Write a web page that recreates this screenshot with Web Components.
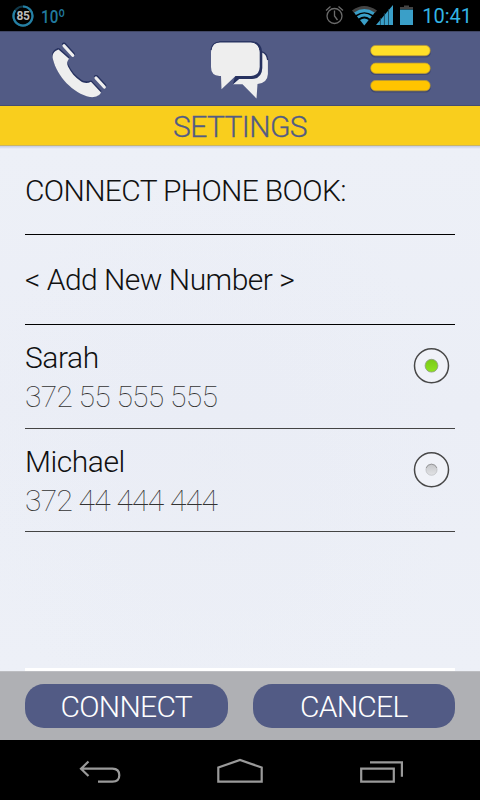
<!DOCTYPE html>
<html lang="en">
<head>
<meta charset="utf-8">
<title>Settings</title>
<style>
    body{
        margin: 0;
        background: #000;
        font-family: Roboto, sans-serif;
    }
</style>
</head>
<body>
<phone-screen>
    <status-bar slot="status" battery="85" temp="10º" time="10:41"></status-bar>
    <app-header slot="header"></app-header>
    <title-bar slot="title">SETTINGS</title-bar>
    <list-row style="--row-height: 89px; --ls: -.65px">CONNECT PHONE BOOK:</list-row>
    <list-row style="--row-height: 90px; --ls: -.5px">&lt; Add New Number &gt;</list-row>
    <contact-row name="Sarah" number="372 55 555 555" checked></contact-row>
    <contact-row name="Michael" number="372 44 444 444"></contact-row>
    <app-button slot="actions">CONNECT</app-button>
    <app-button slot="actions">CANCEL</app-button>
    <nav-bar slot="nav"></nav-bar>
</phone-screen>

<script>
class PhoneScreen extends HTMLElement{
    constructor(){
        super();
        this.attachShadow({mode: 'open'});
        this.shadowRoot.innerHTML=`
            <style>
                :host{
                    display: flex;
                    flex-direction: column;
                    width: 480px;
                    height: 800px;
                    overflow: hidden;
                }
                main{
                    box-sizing: border-box;
                    flex: 1;
                    display: flex;
                    flex-direction: column;
                    padding: 0 25px;
                    background:
                        linear-gradient(#fff,#fff) 25px 100% / 430px 3px no-repeat,
                        linear-gradient(#c5cbe4, rgba(197,203,228,0)) 0 0 / 100% 3px no-repeat,
                        radial-gradient(ellipse at 45% 60%, rgba(232,235,244,.4), rgba(232,235,244,0) 65%),
                        linear-gradient(#edf0f7, #ebeef6 50%, #edf0f7);
                }
                footer{
                    box-sizing: border-box;
                    height: 69px;
                    display: flex;
                    gap: 25px;
                    padding: 12px 25px;
                    background: #afb0b4;
                    border-top: 1px solid #bcbdc1;
                }
            </style>
            <slot name="status"></slot>
            <slot name="header"></slot>
            <slot name="title"></slot>
            <main><slot></slot></main>
            <footer><slot name="actions"></slot></footer>
            <slot name="nav"></slot>
        `;
    }
}

class StatusBar extends HTMLElement{
    constructor(){
        super();
        this.attachShadow({mode: 'open'});
    }

    connectedCallback(){
        this.shadowRoot.innerHTML=`
            <style>
                :host{
                    box-sizing: border-box;
                    display: flex;
                    align-items: center;
                    height: 31px;
                    padding: 0 8px 0 12px;
                    background: #000;
                    color: #33b5e5;
                }
                svg{ display: block; }
                .battery{
                    display: grid;
                    place-items: center;
                    width: 22px;
                    height: 22px;
                }
                .battery > *{ grid-area: 1 / 1; }
                .battery span{
                    font-size: 12px;
                    font-weight: 700;
                    line-height: 22px;
                    color: #bbb;
                    letter-spacing: -.3px;
                }
                .temp{
                    margin-left: 7px;
                    font-size: 19px;
                    font-weight: 500;
                    line-height: 31px;
                    color: #217a9f;
                    transform: scaleX(.8);
                    transform-origin: 0 50%;
                    padding-top: 2px;
                }
                .right{
                    margin-left: auto;
                    display: flex;
                    align-items: center;
                }
                .time{
                    margin-left: 8px;
                    width: 50px;
                    text-align: right;
                    font-size: 20px;
                    line-height: 31px;
                    padding-top: 2px;
                    white-space: nowrap;
                }
            </style>
            <div class="battery">
                <svg width="22" height="22" fill="none" stroke-width="2.2">
                    <circle cx="11" cy="11" r="9.5" stroke="#10394a"/>
                    <path d="M11 1.5A9.5 9.5 0 1 1 3.3 5.4" stroke="#2580a5"/>
                </svg>
                <span>${this.getAttribute('battery')}</span>
            </div>
            <span class="temp">${this.getAttribute('temp')}</span>
            <div class="right">
                <svg width="90" height="31" viewBox="325 0 90 31">
                    <g fill="none" stroke="#6b6b6b" stroke-width="1.3">
                        <circle cx="335.5" cy="16" r="7.5"/>
                        <path d="M335.5 10.5V16l3 4M327 10.5l4.5-4M344 10.5l-4.5-4"/>
                    </g>
                    <path d="M353 10.5Q365 1.5 378 10.5L375.7 13.3Q365 6 355.3 13.3Z" fill="#444"/>
                    <g fill="none" stroke="#3a9fc8" stroke-width="3">
                        <path d="M356 13.8Q365.3 7.5 374.8 13.8"/>
                        <path d="M358.8 17.4Q365.3 12.7 372 17.4"/>
                    </g>
                    <path d="M361 20Q365.3 16.8 369.7 20L365.3 25.5Z" fill="#3a9fc8"/>
                    <path d="M377 25L394 5V25Z" fill="#3a9fc8"/>
                    <path d="M381.4 18v7M385.4 13v12M389.5 9v16" stroke="#163f50" stroke-width=".8"/>
                    <path d="M401 9V7h4V5.5h5V7h4V9Z" fill="#444"/>
                    <path d="M401 9.5h13V25h-13z" fill="#3a9fc8"/>
                </svg>
                <span class="time">${this.getAttribute('time')}</span>
            </div>
        `;
    }
}

class AppHeader extends HTMLElement{
    constructor(){
        super();
        this.attachShadow({mode: 'open'});
        this.shadowRoot.innerHTML=`
            <style>
                :host{
                    box-sizing: border-box;
                    display: grid;
                    grid-template-columns: repeat(3, 160px);
                    height: 75px;
                    background: #525b85;
                    border-top: 1px solid #414765;
                    border-bottom: 1px solid #464d70;
                }
                svg{ display: block; }
            </style>
            <svg width="160" height="73" viewBox="0 32 160 73">
                <defs>
                    <g id="phone">
                        <path d="M58.5 49.5C54 51 51.5 54.5 53 59.5C57 76 73 93.5 90 97C95 97.7 99.5 95.7 101 92.5L91 81.8C87.5 83.5 84 83.5 80.5 81C75 77.5 71 72.5 68 66.5C66.5 63 67.3 61 69 58.7Z" stroke="none"/>
                        <path d="M64 45.7L72.7 55.3M96 78L104.3 87" stroke-width="3.2" stroke-linecap="round"/>
                    </g>
                </defs>
                <use href="#phone" x="-.5" y="-1.4" fill="#273260" stroke="#273260"/>
                <use href="#phone" x=".5" y="-1.4" fill="#273260" stroke="#273260"/>
                <use href="#phone" fill="#eee" stroke="#eee"/>
            </svg>
            <svg width="160" height="73" viewBox="160 32 160 73">
                <path d="M260 51.2Q267.7 52.5 267.9 61V74Q267.5 83 257.5 84L256.5 98.5L242.5 84.3H233L240 78H256Z" fill="#eee"/>
                <path d="M262 51.8Q267.2 53.5 267.7 60" fill="none" stroke="#273260" stroke-width="1.3"/>
                <path d="M219 41.3H251Q261.5 41.5 262.3 52.5V68Q262 78.500 252 79H239L233 84.3L235 76Z" fill="#273260"/>
                <path d="M211 52Q211.5 42.3 220 42H251Q259.3 42.5 259.7 52V67Q259.3 75.5 251 76H235.5L221.5 89.3L221 76H219.5Q211 75.5 211 67Z" fill="#eee"/>
                <path d="M211 50Q212 42 220 42H251Q259 42.5 260 50" fill="none" stroke="#273260" stroke-width="1.2"/>
            </svg>
            <svg width="160" height="73" viewBox="320 32 160 73">
                <g fill="#343d66" opacity=".6">
                    <rect x="370" y="46.5" width="61" height="11" rx="5.5"/>
                    <rect x="370" y="64" width="61" height="11" rx="5.5"/>
                    <rect x="370" y="81.5" width="61" height="11" rx="5.5"/>
                </g>
                <g stroke="#bb9a35" stroke-width=".8">
                    <rect x="370.7" y="45.4" width="59.5" height="10.3" rx="5" fill="#ffdf29"/>
                    <rect x="370.7" y="63.1" width="59.5" height="10.3" rx="5" fill="#ffd209"/>
                    <rect x="370.7" y="80.5" width="59.5" height="10.3" rx="5" fill="#ffc400"/>
                </g>
            </svg>
        `;
    }
}

class TitleBar extends HTMLElement{
    constructor(){
        super();
        this.attachShadow({mode: 'open'});
        this.shadowRoot.innerHTML=`
            <style>
                :host{
                    box-sizing: border-box;
                    display: block;
                    height: 40px;
                    padding-top: 1px;
                    text-align: center;
                    font-size: 30px;
                    font-weight: 300;
                    line-height: 40px;
                    letter-spacing: -.6px;
                    -webkit-text-stroke: .3px #525b85;
                    color: #525b85;
                    background: #f9ce1d;
                    border-bottom: 1px solid #c9b566;
                }
            </style>
            <slot></slot>
        `;
    }
}

class ListRow extends HTMLElement{
    constructor(){
        super();
        this.attachShadow({mode: 'open'});
        this.shadowRoot.innerHTML=`
            <style>
                :host{
                    box-sizing: border-box;
                    display: block;
                    height: var(--row-height);
                    padding-top: 27px;
                    border-bottom: 1px solid #000;
                    font-size: 30px;
                    font-weight: 300;
                    line-height: 36px;
                    letter-spacing: var(--ls, 0);
                    color: #111;
                }
            </style>
            <slot></slot>
        `;
    }
}

class ContactRow extends HTMLElement{
    constructor(){
        super();
        this.attachShadow({mode: 'open'});
    }

    connectedCallback(){
        this.shadowRoot.innerHTML=`
            <style>
                :host{
                    box-sizing: border-box;
                    display: flex;
                    justify-content: space-between;
                    height: 103.5px;
                    padding: 13px 5px 0 0;
                    border-bottom: 1px solid #444;
                    font-size: 30px;
                    line-height: 39px;
                    color: #111;
                }
                .name{
                    font-weight: 300;
                    letter-spacing: -.45px;
                }
                .number{
                    font-weight: 100;
                    letter-spacing: -.72px;
                    color: #333;
                }
                svg{
                    display: block;
                    margin-top: 9px;
                }
            </style>
            <div>
                <div class="name">${this.getAttribute('name')}</div>
                <div class="number">${this.getAttribute('number')}</div>
            </div>
            <svg width="37" height="37">
                <defs>
                    <linearGradient id="on" x2="0" y2="1">
                        <stop stop-color="#79ca16"/>
                        <stop offset="1" stop-color="#8fe31f"/>
                    </linearGradient>
                    <linearGradient id="off" x2="0" y2="1">
                        <stop stop-color="#c5c6c9"/>
                        <stop offset="1" stop-color="#e2e3e6"/>
                    </linearGradient>
                </defs>
                <circle cx="18.5" cy="18.7" r="17" fill="#f0f2f8" stroke="#484848" stroke-width="1.5"/>
                ${this.hasAttribute('checked')
                    ? '<circle cx="18.5" cy="18.7" r="6.4" fill="url(#on)" stroke="#8d9b83" stroke-width=".8"/>'
                    : '<circle cx="18.5" cy="18.7" r="5.6" fill="url(#off)" stroke="#b4b5b8" stroke-width=".6"/><path d="M13.2 17A5.6 5.6 0 0 1 23.8 17" fill="none" stroke="#9a9a9c"/>'}
            </svg>
        `;
    }
}

class AppButton extends HTMLElement{
    constructor(){
        super();
        this.attachShadow({mode: 'open'});
        this.shadowRoot.innerHTML=`
            <style>
                :host{
                    box-sizing: border-box;
                    flex: 1;
                    height: 44px;
                    padding-top: 1px;
                    border-radius: 19px;
                    background: #525b85;
                    color: #fff;
                    font-size: 30px;
                    font-weight: 300;
                    line-height: 44px;
                    letter-spacing: -.7px;
                    text-align: center;
                    cursor: pointer;
                }
            </style>
            <slot></slot>
        `;
    }
}

class NavBar extends HTMLElement{
    constructor(){
        super();
        this.attachShadow({mode: 'open'});
        this.shadowRoot.innerHTML=`
            <style>
                :host{
                    display: block;
                    height: 60px;
                    background: #000;
                }
                svg{ display: block; }
            </style>
            <svg width="480" height="60" viewBox="0 740 480 60" fill="none" stroke="#9a9a9a" stroke-width="2.2">
                <path d="M88.5 761.5L81 768.7L88.5 776M81 768.7H112.5Q119.3 769 119.3 775.2Q119.3 781.5 112.5 781.7H98"/>
                <path d="M218.3 781.7V767.5L240 760L261.7 767.5V781.7Z"/>
                <path d="M361.2 768.6H393.8V781.7H361.2ZM370 762.4H401.9V776.8"/>
            </svg>
        `;
    }
}

customElements.define('phone-screen',PhoneScreen);
customElements.define('status-bar',StatusBar);
customElements.define('app-header',AppHeader);
customElements.define('title-bar',TitleBar);
customElements.define('list-row',ListRow);
customElements.define('contact-row',ContactRow);
customElements.define('app-button',AppButton);
customElements.define('nav-bar',NavBar);
</script>
</body>
</html>
